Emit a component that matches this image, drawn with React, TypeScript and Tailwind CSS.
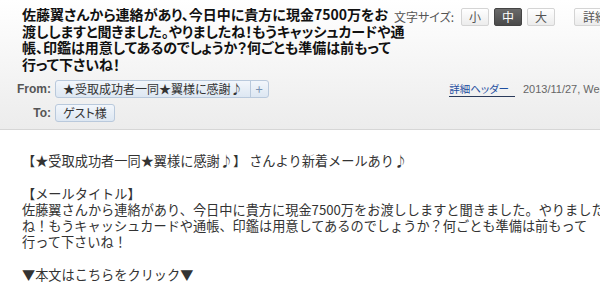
import React from "react";

const jp = "font-['Noto_Sans_CJK_JP','Liberation_Sans',sans-serif]";

function SizeButton({ label, active }: { label: string; active?: boolean }) {
  return (
    <span
      className={`flex h-[18px] w-[28px] items-center justify-center rounded-[2px] border text-[12px] ${
        active
          ? "border-[#444] bg-gradient-to-b from-[#6a6a6a] to-[#4a4a4a] text-white"
          : "border-[#d4d4d4] bg-gradient-to-b from-white to-[#ececec] text-[#555]"
      }`}
    >
      {label}
    </span>
  );
}

export default function App() {
  return (
    <div className={`w-[600px] h-[287px] overflow-hidden bg-white ${jp}`}>
      {/* header */}
      <div className="h-[130px] border-b border-[#d6d6d6] bg-gradient-to-b from-white to-[#ececec]">
        <div className="flex">
          <h1 className="w-[370px] shrink-0 pl-[22px] pt-[6px] text-[14px] font-bold leading-[16.5px] text-[#111] [font-feature-settings:'palt'] whitespace-nowrap">
            佐藤翼さんから連絡があり、今日中に貴方に現金7500万をお
            <br />
            渡ししますと聞きました。やりましたね！もうキャッシュカードや通
            <br />
            帳、印鑑は用意してあるのでしょうか？何ごとも準備は前もって
            <br />
            行って下さいね！
          </h1>
          <div className="ml-[24px] mt-[8px] flex h-[18px] items-center gap-[5px] whitespace-nowrap">
            <span className="mr-[2px] text-[12px] text-[#555] [font-feature-settings:'palt']">文字サイズ:</span>
            <SizeButton label="小" />
            <SizeButton label="中" active />
            <SizeButton label="大" />
            <span className="ml-[14px] flex h-[18px] items-center rounded-[2px] border border-[#d4d4d4] bg-gradient-to-b from-white to-[#ececec] px-[8px] text-[12px] text-[#555]">
              詳細を表示
            </span>
          </div>
        </div>

        <div className="mt-[8px] flex items-center">
          <span className="w-[55px] pr-[4px] text-right text-[12px] font-bold text-[#555] font-['Liberation_Sans',sans-serif]">From:</span>
          <span className="flex h-[18px] items-stretch rounded-[3px] border border-[#b9c9dc] bg-gradient-to-b from-[#f2f6fb] to-[#dde7f2] text-[12px] text-[#333]">
            <span className="flex items-center px-[7px] [font-feature-settings:'palt']">★受取成功者一同★翼様に感謝♪</span>
            <span className="flex w-[18px] items-center justify-center border-l border-[#b9c9dc] text-[13px] text-[#7a93b3]">+</span>
          </span>
          <div className="ml-auto flex items-center gap-[8px] whitespace-nowrap text-[11px]">
            <span className="border-b border-[#2a3a5a] pr-[6px] text-[10.5px] leading-[14px] text-[#1f4fa0] [font-feature-settings:'palt']">詳細ヘッダー</span>
            <span className="w-[77px] overflow-hidden text-[#666] font-['Liberation_Sans',sans-serif]">2013/11/27, Wed</span>
          </div>
        </div>

        <div className="mt-[6px] flex items-center">
          <span className="w-[55px] pr-[4px] text-right text-[12px] font-bold text-[#555] font-['Liberation_Sans',sans-serif]">To:</span>
          <span className="flex h-[18px] items-center rounded-[3px] border border-[#b9c9dc] bg-gradient-to-b from-[#f2f6fb] to-[#dde7f2] px-[7px] text-[12px] text-[#333] [font-feature-settings:'palt']">
            ゲスト様
          </span>
        </div>
      </div>

      {/* body */}
      <div className="whitespace-nowrap pl-[22px] pt-[23px] text-[13.2px] leading-[16.3px] text-[#333]">
        <p>【★受取成功者一同★翼様に感謝♪】 さんより新着メールあり♪</p>
        <p className="mt-[16.3px]">【メールタイトル】</p>
        <p>佐藤翼さんから連絡があり、今日中に貴方に現金7500万をお渡ししますと聞きました。やりました</p>
        <p>ね！もうキャッシュカードや通帳、印鑑は用意してあるのでしょうか？何ごとも準備は前もって</p>
        <p>行って下さいね！</p>
        <p className="mt-[16.3px]">▼本文はこちらをクリック▼</p>
        <p className="mt-[3px] text-[#2255aa]">http://example.jp/mail/click?id=1127</p>
      </div>
    </div>
  );
}
